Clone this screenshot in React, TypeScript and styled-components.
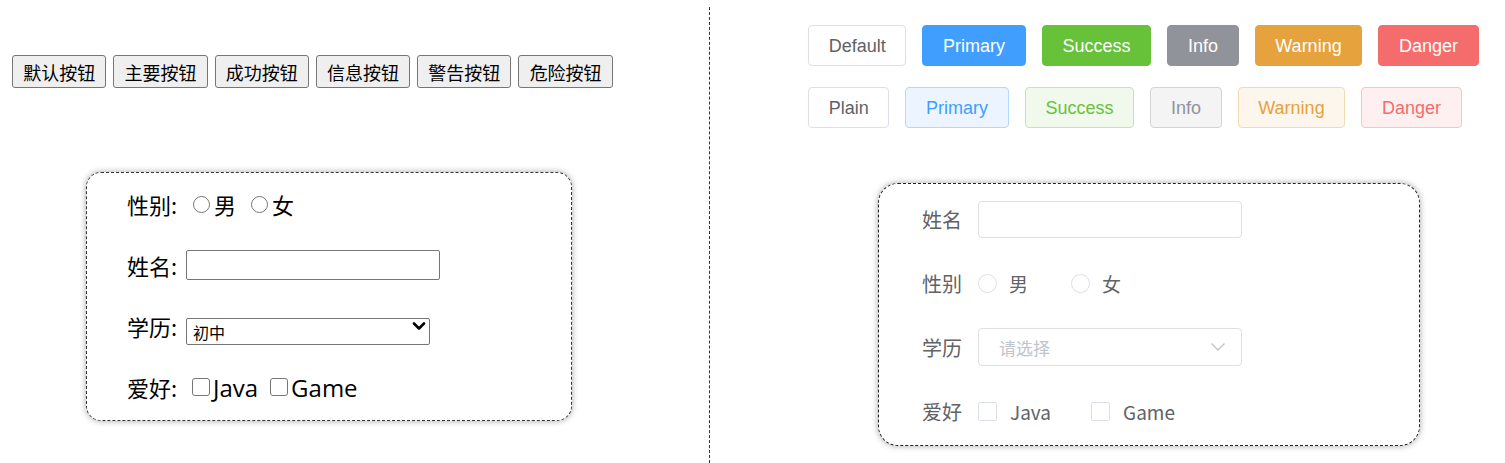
import React from 'react';
import styled, { createGlobalStyle, css } from 'styled-components';

const GlobalStyle = createGlobalStyle`
  html, body { margin: 0; padding: 0; background: #fff; }
  body { font-family: "Noto Sans CJK SC", "Noto Sans", sans-serif; }
  *, *::before, *::after { box-sizing: border-box; }
`;

const Page = styled.div`
  display: flex;
  min-height: 100vh;
`;

const LeftPanel = styled.section`
  width: 709px;
  flex: none;
  padding: 55px 0 0 12px;
`;

const Divider = styled.div`
  width: 0;
  border-left: 1px dashed #333;
  margin-top: 7px;
`;

const RightPanel = styled.section`
  flex: 1;
  padding: 25px 0 0 98px;
`;

/* ---------- native-looking side ---------- */

const NativeButtonRow = styled.div`
  display: flex;
  gap: 7px;
`;

const NativeButton = styled.button`
  width: 94.3px;
  height: 33px;
  padding: 0;
  font: 18px "Noto Sans CJK SC", sans-serif;
  line-height: 1;
  color: #000;
  background: #efefef;
  border: 1px solid #767676;
  border-radius: 3px;
`;

const NativeForm = styled.form`
  margin: 84px 0 0 74px;
  width: 486px;
  height: 249px;
  border: 1px dashed #333;
  border-radius: 15px;
  box-shadow: 0 0 6px rgba(0, 0, 0, 0.35);
  padding: 13px 0 0 40px;
  display: flex;
  flex-direction: column;
  gap: 25px;
`;

const NativeRow = styled.div`
  display: flex;
  align-items: center;
  height: 36px;
  font: 22px "Noto Sans CJK SC", sans-serif;
  color: #000;
`;

const NativeLabel = styled.span`
  width: 59px;
  flex: none;
`;

const NativeText = styled.span<{ $latin?: boolean }>`
  ${(p) =>
    p.$latin &&
    css`
      font: 24px "Open Sans", sans-serif;
    `}
`;

const NativeRadio = styled.input.attrs({ type: 'radio' })<{ $first?: boolean }>`
  appearance: none;
  width: 17px;
  height: 17px;
  margin: 0 4px 0 ${(p) => (p.$first ? '7px' : '15px')};
  border: 1px solid #767676;
  border-radius: 50%;
  background: #fff;
`;

const NativeCheck = styled.input.attrs({ type: 'checkbox' })<{ $first?: boolean }>`
  appearance: none;
  width: 18px;
  height: 18px;
  margin: 0 3px 0 ${(p) => (p.$first ? '6px' : '12px')};
  border: 1px solid #767676;
  border-radius: 3px;
  background: #fff;
`;

const NativeInput = styled.input`
  width: 254px;
  height: 30px;
  border: 1px solid #767676;
  border-radius: 2px;
  padding: 0 4px;
  font: 16px "Noto Sans CJK SC", sans-serif;
`;

const SelectWrap = styled.div<{ $w: number; $h: number }>`
  position: relative;
  width: ${(p) => p.$w}px;
  height: ${(p) => p.$h}px;
`;

const NativeSelect = styled.select`
  appearance: none;
  width: 100%;
  height: 100%;
  border: 1px solid #767676;
  border-radius: 2px;
  padding: 0 0 0 6px;
  font: 16px "Noto Sans CJK SC", sans-serif;
  color: #000;
  background: #fff;
`;

const SelectArrow = styled.svg<{ $right: number }>`
  position: absolute;
  right: ${(p) => p.$right}px;
  top: 50%;
  transform: translateY(-50%);
  pointer-events: none;
`;

/* ---------- element-ui side ---------- */

type Variant = 'default' | 'primary' | 'success' | 'info' | 'warning' | 'danger';

const palette: Record<Exclude<Variant, 'default'>, { main: string; light: string; border: string }> = {
  primary: { main: '#409eff', light: '#ecf5ff', border: '#b3d8ff' },
  success: { main: '#67c23a', light: '#f0f9eb', border: '#c2e7b0' },
  info: { main: '#909399', light: '#f4f4f5', border: '#d3d4d6' },
  warning: { main: '#e6a23c', light: '#fdf6ec', border: '#f5dab1' },
  danger: { main: '#f56c6c', light: '#fef0f0', border: '#fbc4c4' },
};

const ElButtonRow = styled.div<{ $top?: number }>`
  display: flex;
  gap: 16px;
  margin-top: ${(p) => p.$top ?? 0}px;
`;

const ElButton = styled.button<{ $variant: Variant; $plain?: boolean }>`
  height: 41px;
  padding: 0 19.7px;
  font: 18px "Liberation Sans", Arial, sans-serif;
  line-height: 1;
  border-radius: 4px;
  border: 1px solid #dcdfe6;
  background: #fff;
  color: #606266;
  ${(p) => {
    if (p.$variant === 'default') return '';
    const c = palette[p.$variant];
    return p.$plain
      ? css`
          background: ${c.light};
          border-color: ${c.border};
          color: ${c.main};
        `
      : css`
          background: ${c.main};
          border-color: ${c.main};
          color: #fff;
        `;
  }}
`;

const ElForm = styled.form`
  margin: 55px 0 0 70px;
  width: 542px;
  height: 263px;
  border: 1px dashed #222;
  border-radius: 20px;
  box-shadow: 0 0 6px rgba(0, 0, 0, 0.35);
  padding: 16px 0 0 43px;
  display: flex;
  flex-direction: column;
  gap: 26px;
`;

const ElRow = styled.div`
  display: flex;
  align-items: center;
  height: 38px;
`;

const ElLabel = styled.span`
  width: 56px;
  flex: none;
  font-size: 20px;
  color: #606266;
`;

const ElInput = styled.input`
  width: 264px;
  height: 37px;
  border: 1px solid #dcdfe6;
  border-radius: 4px;
  padding: 0 20px;
  font: 17px "Noto Sans CJK SC", sans-serif;
  color: #606266;
  background: #fff;
  &::placeholder { color: #c0c4cc; }
`;

const ElOption = styled.label<{ $gap: number }>`
  display: flex;
  align-items: center;
  margin-right: ${(p) => p.$gap}px;
  font-size: 19px;
  color: #606266;
`;

const ElRadio = styled.input.attrs({ type: 'radio' })`
  appearance: none;
  width: 19px;
  height: 19px;
  margin: 0 12px 0 0;
  border: 1px solid #dcdfe6;
  border-radius: 50%;
  background: #fff;
`;

const ElCheck = styled.input.attrs({ type: 'checkbox' })`
  appearance: none;
  width: 19px;
  height: 19px;
  margin: 0 13px 0 0;
  border: 1px solid #dcdfe6;
  border-radius: 2px;
  background: #fff;
`;

const nativeButtons = ['默认按钮', '主要按钮', '成功按钮', '信息按钮', '警告按钮', '危险按钮'];

const row1: { v: Variant; t: string }[] = [
  { v: 'default', t: 'Default' },
  { v: 'primary', t: 'Primary' },
  { v: 'success', t: 'Success' },
  { v: 'info', t: 'Info' },
  { v: 'warning', t: 'Warning' },
  { v: 'danger', t: 'Danger' },
];

const row2: { v: Variant; t: string }[] = [
  { v: 'default', t: 'Plain' },
  { v: 'primary', t: 'Primary' },
  { v: 'success', t: 'Success' },
  { v: 'info', t: 'Info' },
  { v: 'warning', t: 'Warning' },
  { v: 'danger', t: 'Danger' },
];

export default function App() {
  return (
    <Page>
      <GlobalStyle />
      <LeftPanel>
        <NativeButtonRow>
          {nativeButtons.map((b) => (
            <NativeButton key={b} type="button">{b}</NativeButton>
          ))}
        </NativeButtonRow>
        <NativeForm onSubmit={(e) => e.preventDefault()}>
          <NativeRow>
            <NativeLabel>性别:</NativeLabel>
            <NativeRadio name="sex1" $first />
            <NativeText>男</NativeText>
            <NativeRadio name="sex1" />
            <NativeText>女</NativeText>
          </NativeRow>
          <NativeRow>
            <NativeLabel>姓名:</NativeLabel>
            <NativeInput type="text" />
          </NativeRow>
          <NativeRow>
            <NativeLabel>学历:</NativeLabel>
            <SelectWrap $w={244} $h={27}>
              <NativeSelect defaultValue="初中">
                <option>初中</option>
                <option>高中</option>
                <option>大学</option>
              </NativeSelect>
              <SelectArrow $right={4} width="14" height="10" viewBox="0 0 14 10">
                <path d="M2 2.5 L7 7.5 L12 2.5" fill="none" stroke="#000" strokeWidth="2.6" strokeLinecap="round" strokeLinejoin="round" />
              </SelectArrow>
            </SelectWrap>
          </NativeRow>
          <NativeRow>
            <NativeLabel>爱好:</NativeLabel>
            <NativeCheck $first />
            <NativeText $latin>Java</NativeText>
            <NativeCheck />
            <NativeText $latin>Game</NativeText>
          </NativeRow>
        </NativeForm>
      </LeftPanel>
      <Divider />
      <RightPanel>
        <ElButtonRow>
          {row1.map((b) => (
            <ElButton key={b.t} type="button" $variant={b.v}>{b.t}</ElButton>
          ))}
        </ElButtonRow>
        <ElButtonRow $top={21}>
          {row2.map((b) => (
            <ElButton key={b.t} type="button" $variant={b.v} $plain>{b.t}</ElButton>
          ))}
        </ElButtonRow>
        <ElForm onSubmit={(e) => e.preventDefault()}>
          <ElRow>
            <ElLabel>姓名</ElLabel>
            <ElInput type="text" />
          </ElRow>
          <ElRow>
            <ElLabel>性别</ElLabel>
            <ElOption $gap={43}><ElRadio name="sex2" />男</ElOption>
            <ElOption $gap={0}><ElRadio name="sex2" />女</ElOption>
          </ElRow>
          <ElRow>
            <ElLabel>学历</ElLabel>
            <SelectWrap $w={264} $h={38}>
              <ElInput type="text" readOnly placeholder="请选择" style={{ height: 38 }} />
              <SelectArrow $right={16} width="16" height="10" viewBox="0 0 16 10">
                <path d="M1.5 1.5 L8 8 L14.5 1.5" fill="none" stroke="#c0c4cc" strokeWidth="1.4" />
              </SelectArrow>
            </SelectWrap>
          </ElRow>
          <ElRow>
            <ElLabel>爱好</ElLabel>
            <ElOption $gap={40}><ElCheck />Java</ElOption>
            <ElOption $gap={0}><ElCheck />Game</ElOption>
          </ElRow>
        </ElForm>
      </RightPanel>
    </Page>
  );
}
